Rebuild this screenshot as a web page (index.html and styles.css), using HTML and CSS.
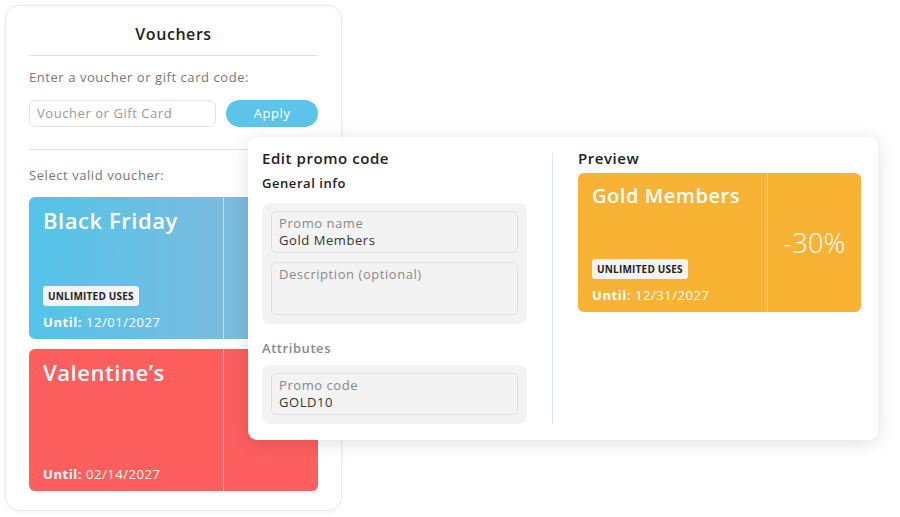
FILE: index.html
```html
<!DOCTYPE html>
<html lang="en">
<head>
    <meta charset="UTF-8">
    <title>Vouchers</title>
    <link rel="stylesheet" href="styles.css">
</head>
<body>
<div class="stage">
    <div class="vouchers">
        <h2 class="vouchers-title">Vouchers</h2>
        <p class="hint">Enter a voucher or gift card code:</p>
        <div class="code-row">
            <div class="code-input">Voucher or Gift Card</div>
            <div class="apply">Apply</div>
        </div>
        <p class="hint select">Select valid voucher:</p>
        <div class="ticket blue">
            <div class="ticket-main">
                <div class="ticket-name">Black Friday</div>
                <div class="ticket-foot">
                    <span class="badge">UNLIMITED USES</span>
                    <div class="until"><b>Until:</b> 12/01/2027</div>
                </div>
            </div>
            <div class="ticket-side"></div>
        </div>
        <div class="ticket red">
            <div class="ticket-main">
                <div class="ticket-name">Valentine’s</div>
                <div class="ticket-foot">
                    <div class="until"><b>Until:</b> 02/14/2027</div>
                </div>
            </div>
            <div class="ticket-side"></div>
        </div>
    </div>

    <div class="editor">
        <div class="edit-col">
            <h3 class="edit-title">Edit promo code</h3>
            <h4 class="group-title">General info</h4>
            <div class="group">
                <div class="field">
                    <span class="field-label">Promo name</span>
                    <span class="field-value">Gold Members</span>
                </div>
                <div class="field tall">
                    <span class="field-label">Description (optional)</span>
                </div>
            </div>
            <h4 class="group-title muted">Attributes</h4>
            <div class="group">
                <div class="field">
                    <span class="field-label">Promo code</span>
                    <span class="field-value">GOLD10</span>
                </div>
            </div>
        </div>
        <div class="split"></div>
        <div class="preview-col">
            <h3 class="edit-title">Preview</h3>
            <div class="ticket gold">
                <div class="ticket-main">
                    <div class="ticket-name">Gold Members</div>
                    <div class="ticket-foot">
                        <span class="badge">UNLIMITED USES</span>
                        <div class="until"><b>Until:</b> 12/31/2027</div>
                    </div>
                </div>
                <div class="ticket-side">-30%</div>
            </div>
        </div>
    </div>
</div>
</body>
</html>
```

FILE: styles.css
```css
* {
    margin: 0;
    padding: 0;
    box-sizing: border-box;
}

body {
    background-color: #fff;
    font-family: "Open Sans", "DejaVu Sans", sans-serif;
    letter-spacing: 0.035em;
    color: #222;
}

.stage {
    position: relative;
    width: 900px;
    height: 517px;
    padding: 5px;
}

/* left panel */
.vouchers {
    width: 337px;
    height: 506px;
    padding: 17px 23px 0 23px;
    border: 1px solid #e8e8e8;
    border-radius: 14px;
    box-shadow: 0 1px 4px rgba(0, 0, 0, 0.05);
    display: flex;
    flex-direction: column;
}

.vouchers-title {
    font-size: 16px;
    font-weight: 600;
    text-align: center;
    line-height: 22px;
    padding-bottom: 10px;
    border-bottom: 1px solid #dde5ea;
}

.hint {
    font-size: 13px;
    font-weight: 500;
    color: #777;
    line-height: 18px;
    margin-top: 12px;
}

.code-row {
    display: flex;
    gap: 10px;
    margin-top: 14px;
    padding-bottom: 22px;
    border-bottom: 1px solid #dde5ea;
}

.code-input {
    width: 188px;
    height: 27px;
    border: 1px solid #e3e3e3;
    border-radius: 6px;
    font-size: 13px;
    color: #999;
    line-height: 25px;
    padding-left: 7px;
}

.apply {
    width: 92px;
    height: 27px;
    border-radius: 14px;
    background-color: #5bc4e8;
    color: #fff;
    font-size: 13px;
    font-weight: 500;
    text-align: center;
    line-height: 27px;
}

.hint.select {
    margin-top: 16px;
    margin-bottom: 13px;
}

/* voucher tickets */
.ticket {
    display: flex;
    height: 142px;
    border-radius: 6px;
    color: #fff;
    overflow: hidden;
    margin-bottom: 10px;
}

.ticket.blue {
    background: linear-gradient(90deg, #53c4ea, #8cb8da);
}

.ticket.red {
    background-color: #fd5e5e;
}

.ticket.gold {
    background-color: #f8b234;
    height: 139px;
    margin: 6px 0 0 0;
}

.ticket-main {
    width: 195px;
    padding: 10px 14px 8px 14px;
    border-right: 1px solid rgba(255, 255, 255, 0.55);
    display: flex;
    flex-direction: column;
    justify-content: space-between;
}

.gold .ticket-main {
    width: 190px;
}

.ticket-side {
    flex: 1;
    display: flex;
    align-items: center;
    justify-content: center;
    font-size: 27px;
    font-weight: 300;
    letter-spacing: 0.01em;
}

.ticket-name {
    font-size: 22px;
    font-weight: 600;
    line-height: 26px;
}

.gold .ticket-name {
    font-size: 20px;
}

.badge {
    display: inline-block;
    background-color: #f3f3f3;
    color: #222;
    font-size: 10px;
    font-weight: 700;
    line-height: 20px;
    padding: 0 5px;
    border-radius: 3px;
    letter-spacing: 0.02em;
}

.until {
    font-size: 13px;
    line-height: 18px;
    margin-top: 7px;
    font-weight: 400;
}

.until b {
    font-weight: 700;
}

/* editor overlay */
.editor {
    position: absolute;
    left: 248px;
    top: 137px;
    width: 630px;
    height: 303px;
    background-color: #fff;
    border-radius: 9px;
    box-shadow: 0 3px 18px rgba(0, 0, 0, 0.13);
    padding: 12px 17px 16px 14px;
    display: flex;
}

.edit-col {
    width: 265px;
}

.edit-title {
    font-size: 15px;
    font-weight: 600;
    line-height: 18px;
}

.group-title {
    font-size: 13px;
    font-weight: 600;
    line-height: 18px;
    margin-top: 7px;
    margin-bottom: 11px;
}

.group-title.muted {
    color: #888;
    margin-top: 15px;
    margin-bottom: 8px;
}

.group {
    background-color: #f3f3f3;
    border-radius: 8px;
    padding: 8px 9px 9px 9px;
    display: flex;
    flex-direction: column;
    gap: 9px;
}

.field {
    height: 42px;
    border: 1px solid #e1e1e1;
    border-radius: 5px;
    padding: 3px 7px;
    display: flex;
    flex-direction: column;
    font-size: 13px;
    line-height: 17px;
}

.field.tall {
    height: 53px;
}

.field-label {
    color: #888;
}

.field-value {
    color: #333;
}

.split {
    width: 1px;
    background-color: #dde5ea;
    margin: 4px 25px 0 25px;
}

.preview-col {
    flex: 1;
}
```
